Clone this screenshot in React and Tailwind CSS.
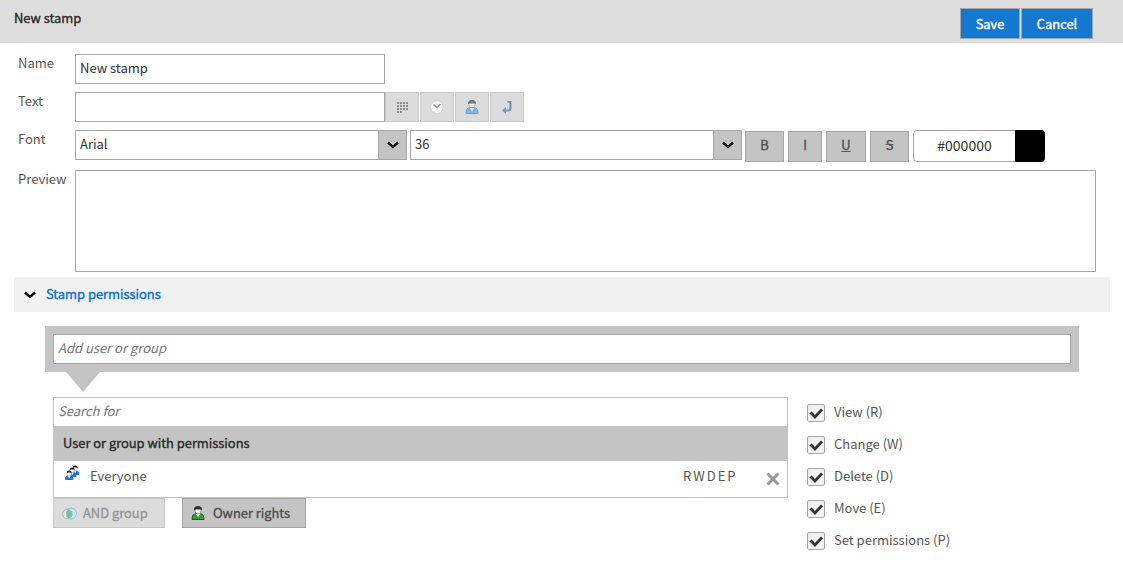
import { useState } from "react";

const permissionList = [
  { key: "R", label: "View (R)" },
  { key: "W", label: "Change (W)" },
  { key: "D", label: "Delete (D)" },
  { key: "E", label: "Move (E)" },
  { key: "P", label: "Set permissions (P)" },
];

const boldText =
  "font-['Noto_Sans_CJK_SC_DemiLight','Noto_Sans_CJK_SC',sans-serif] font-bold";

function Chevron() {
  return (
    <svg width="12" height="8" viewBox="0 0 12 8" aria-hidden="true">
      <path d="M1 1.5 L6 6 L11 1.5" fill="none" stroke="#000" strokeWidth="2.4" />
    </svg>
  );
}

function Person({ body, edge }) {
  return (
    <svg width="14" height="16" viewBox="0 0 14 16" aria-hidden="true">
      <path
        d="M1 14.5 L1.5 11 Q2 9 5 8.5 H9 Q12 9 12.5 11 L13 14.5 Z"
        fill={body}
        stroke={edge}
      />
      <path d="M4.5 8.5 L7 12 L9.5 8.5 Z" fill="#fff" />
      <circle cx="7" cy="6" r="3" fill="#fff" stroke="#777" strokeWidth="0.7" />
      <path d="M3 5.5 Q2.5 1 7 1 Q11.5 1 11 5.5 L10 4.5 H4.5 Z" fill="#333" />
    </svg>
  );
}

function SmallPerson({ x, y }) {
  return (
    <g transform={`translate(${x} ${y})`}>
      <path d="M0.5 9.5 L1 7 Q2 5.5 4 5.5 Q6.5 5.5 7.5 7 L8 9.5 Z" fill="#1b7fe0" stroke="#1a5aa8" strokeWidth="0.8" />
      <path d="M2.5 5.5 L4.2 8 L6 5.5 Z" fill="#fff" />
      <circle cx="4.2" cy="3.8" r="2.1" fill="#fff" stroke="#888" strokeWidth="0.4" />
      <path d="M1.8 3.5 Q1.5 0.5 4.2 0.5 Q7 0.5 6.6 3.5 L5.5 2.6 H2.8 Z" fill="#222" />
    </g>
  );
}

function ToolButton({ label, children }) {
  return (
    <button
      type="button"
      aria-label={label}
      disabled
      className="flex h-[30px] w-[34px] items-center justify-center border border-[#c9c9c9] bg-[#dcdcdc]"
    >
      {children}
    </button>
  );
}

function SelectBox({ label, id, value, options }) {
  const [selected, setSelected] = useState(value);

  return (
    <div className="relative h-[30px] w-[332px]">
      <select
        id={id}
        aria-label={label}
        value={selected}
        onChange={(e) => setSelected(e.target.value)}
        className="h-[30px] w-full appearance-none border border-[#a6a6a6] bg-white px-1 pb-[2px] text-[#333]"
      >
        {options.map((option) => (
          <option key={option}>{option}</option>
        ))}
      </select>
      <span className="pointer-events-none absolute inset-y-0 right-0 flex w-[29px] items-center justify-center border border-[#a6a6a6] bg-[#c4c4c4]">
        <Chevron />
      </span>
    </div>
  );
}

function App() {
  const [name, setName] = useState("New stamp");
  const [text, setText] = useState("");
  const [color, setColor] = useState("#000000");
  const [permissions, setPermissions] = useState(["R", "W", "D", "E", "P"]);

  const togglePermission = (key) => {
    setPermissions(
      permissions.includes(key)
        ? permissions.filter((p) => p !== key)
        : [...permissions, key]
    );
  };

  return (
    <div className="bg-white font-['Noto_Sans_CJK_SC','Open_Sans',sans-serif] text-[13px] leading-5 text-[#555]">
      <header className={`flex h-[43px] items-start justify-between bg-[#ddd] pt-2 pr-[30px] pl-[14px] ${boldText}`}>
        <h1 className="text-[#333]">New stamp</h1>
        <div className="flex gap-px">
          <button type="button" className="h-[31px] w-[60px] border border-[#a6a6a6] bg-[#1478d0] text-white">
            Save
          </button>
          <button type="button" className="h-[31px] w-[72px] border border-[#a6a6a6] bg-[#1478d0] text-white">
            Cancel
          </button>
        </div>
      </header>

      <form className="pt-[11px] pr-[27px] pl-[18px]">
        <div className="flex h-[38px]">
          <label htmlFor="name" className="w-[57px] leading-[18px]">Name</label>
          <input
            id="name"
            value={name}
            onChange={(e) => setName(e.target.value)}
            className="h-[30px] w-[310px] border border-[#a6a6a6] px-1 pb-[3px] text-[#333]"
          />
        </div>
        <div className="flex h-[38px]">
          <label htmlFor="text" className="w-[57px] leading-[18px]">Text</label>
          <input
            id="text"
            value={text}
            onChange={(e) => setText(e.target.value)}
            className="h-[30px] w-[310px] border border-[#a6a6a6] px-1 pb-[3px] text-[#333]"
          />
          <div className="flex gap-px">
            <ToolButton label="Insert field">
              <svg width="12" height="12" viewBox="0 0 12 12" fill="#8c8c8c" aria-hidden="true">
                {[1, 4, 7, 10].map((y) =>
                  [1, 4, 7, 10].map((x) =>
                    y === 10 && x > 4 ? null : (
                      <rect key={`${x}-${y}`} x={x} y={y} width="2" height="2" />
                    )
                  )
                )}
              </svg>
            </ToolButton>
            <ToolButton label="Insert time">
              <svg width="14" height="14" viewBox="0 0 14 14" aria-hidden="true">
                <circle cx="7" cy="7" r="6.3" fill="#fafafa" stroke="#c8c8c8" strokeWidth="0.8" />
                <path d="M3.5 4.5 L7 7.5 L10.5 4" fill="none" stroke="#7396c8" strokeWidth="1.6" />
              </svg>
            </ToolButton>
            <ToolButton label="Insert user">
              <span className="pr-px opacity-60">
                <Person body="#3ba2f5" edge="#2874c0" />
              </span>
            </ToolButton>
            <ToolButton label="Insert line break">
              <svg width="12" height="14" viewBox="0 0 12 14" aria-hidden="true">
                <path d="M6.5 2 H9.5 V8 Q9.5 10.5 7 10.5 H4" fill="none" stroke="#7396c8" strokeWidth="2.2" />
                <path d="M5 7 L1 10.5 L5 14 Z" fill="#7396c8" />
              </svg>
            </ToolButton>
          </div>
        </div>
        <div className="flex h-[40px]">
          <label htmlFor="font" className="w-[57px] leading-[18px]">Font</label>
          <div className="flex gap-[3px]">
            <SelectBox id="font" label="Font" value="Arial" options={["Arial", "Courier New", "Times New Roman"]} />
            <SelectBox id="size" label="Font size" value="36" options={["12", "24", "36", "48"]} />
          </div>
          <div className={`mt-px ml-[3px] flex gap-1 ${boldText}`}>
            <button type="button" className="h-[31px] w-[39px] border border-[#a6a6a6] bg-[#c4c4c4] pb-[3px]">B</button>
            <button type="button" className="h-[31px] w-[34px] border border-[#a6a6a6] bg-[#c4c4c4] pb-[3px]">I</button>
            <button type="button" className="h-[31px] w-[40px] border border-[#a6a6a6] bg-[#c4c4c4] pb-[3px] underline">U</button>
            <button type="button" className="h-[31px] w-[39px] border border-[#a6a6a6] bg-[#c4c4c4] pb-[3px] line-through">S</button>
          </div>
          <div className="ml-1 flex h-[32px] w-[132px] overflow-hidden rounded">
            <input
              aria-label="Color"
              value={color}
              onChange={(e) => setColor(e.target.value)}
              className="w-[102px] rounded-l border border-r-0 border-[#a6a6a6] pb-[3px] text-center text-sm text-[#333]"
            />
            <span className="w-[30px] bg-black"></span>
          </div>
        </div>
        <div className="flex">
          <label htmlFor="preview" className="w-[57px] leading-[18px]">Preview</label>
          <textarea id="preview" readOnly className="h-[102px] flex-1 resize-none border border-[#a6a6a6]"></textarea>
        </div>
      </form>

      <section>
        <h2 className={`mt-[5px] mr-[13px] ml-[14px] bg-[#f1f1f1] ${boldText}`}>
          <button type="button" className="flex h-[35px] items-center gap-[10px] pl-[10px] text-[#1478d0]">
            <Chevron />
            <span className="pb-[2px]">Stamp permissions</span>
          </button>
        </h2>

        <div className="mt-[14px] mr-[44px] ml-[45px]">
          <div className="bg-[#c4c4c4] p-2">
            <input
              aria-label="Add user or group"
              placeholder="Add user or group"
              className="block h-[30px] w-full border border-[#a6a6a6] bg-white px-1 pb-[3px] italic placeholder:text-[#757575]"
            />
          </div>
          <svg width="34" height="20" viewBox="0 0 34 20" className="ml-[21px] block" aria-hidden="true">
            <path d="M0 0 H34 L17 20 Z" fill="#c4c4c4" />
          </svg>

          <div className="mt-[5px] flex gap-[19px] px-2">
            <div className="flex-1">
              <div className="border border-[#c4c4c4]">
                <input
                  aria-label="Search for"
                  placeholder="Search for"
                  className="block h-7 w-full px-1 pb-[3px] italic placeholder:text-[#757575]"
                />
                <table className="w-full">
                  <thead>
                    <tr className="h-[35px] bg-[#c4c4c4] text-left text-[#333]">
                      <th colSpan={3} className={`px-[9px] pb-[2px] ${boldText}`}>
                        User or group with permissions
                      </th>
                    </tr>
                  </thead>
                  <tbody>
                    <tr className="h-9">
                      <td className="pt-1 pl-[10px] align-top">
                        <div className="flex items-start gap-[10px]">
                          <svg width="16" height="16" viewBox="0 0 16 16" aria-hidden="true">
                            <SmallPerson x={7} y={0} />
                            <SmallPerson x={4} y={2} />
                            <SmallPerson x={1} y={5} />
                          </svg>
                          <span className="pt-px">Everyone</span>
                        </div>
                      </td>
                      <td className="w-[68px] pt-[5px] align-top">
                        <div className="flex gap-[2px]">
                          {permissions.map((p) => (
                            <span key={p}>{p}</span>
                          ))}
                        </div>
                      </td>
                      <td className="w-[36px]">
                        <button type="button" aria-label="Remove Everyone" className="ml-[15px] block">
                          <svg width="14" height="14" viewBox="0 0 14 14" aria-hidden="true">
                            <path d="M1.5 1.5 L12.5 12.5 M12.5 1.5 L1.5 12.5" stroke="#999" strokeWidth="3" />
                          </svg>
                        </button>
                      </td>
                    </tr>
                  </tbody>
                </table>
              </div>
              <div className={`flex gap-[17px] ${boldText}`}>
                <button type="button" disabled className="flex h-[30px] w-[112px] items-center gap-[6px] border border-[#c9c9c9] bg-[#dcdcdc] pl-2 text-[#999]">
                  <svg width="15" height="13" viewBox="0 0 15 13" aria-hidden="true">
                    <circle cx="9" cy="6.5" r="5.5" fill="#c8e9f8" stroke="#88c4e4" />
                    <circle cx="5.5" cy="7" r="4.8" fill="#d8eee8" stroke="#88c4e4" />
                    <path d="M6 2.5 Q10 3.5 10 7 T6.5 11.5 Q4 10 4 7 T6 2.5 Z" fill="#80c090" />
                  </svg>
                  AND group
                </button>
                <button type="button" className="flex h-[30px] w-[124px] items-center gap-2 border border-[#a6a6a6] bg-[#c4c4c4] pl-2">
                  <Person body="#30a030" edge="#126012" />
                  Owner rights
                </button>
              </div>
            </div>

            <div className="flex w-[264px] flex-col gap-3 pt-[5px]">
              {permissionList.map((item) => (
                <label key={item.key} className="flex h-5 gap-[9px]">
                  <span className="relative mt-[2px] h-[18px] w-[18px]">
                    <input
                      type="checkbox"
                      checked={permissions.includes(item.key)}
                      onChange={() => togglePermission(item.key)}
                      className="block h-[18px] w-[18px] appearance-none rounded-xs border border-[#a6a6a6] bg-[#f1f1f1]"
                    />
                    {permissions.includes(item.key) && (
                      <svg width="18" height="18" viewBox="0 0 18 18" className="pointer-events-none absolute inset-0" aria-hidden="true">
                        <path d="M3.5 8.5 L8 13 L15 5.5" fill="none" stroke="#333" strokeWidth="2.8" />
                      </svg>
                    )}
                  </span>
                  {item.label}
                </label>
              ))}
            </div>
          </div>
        </div>
      </section>
    </div>
  );
}

export default App;
